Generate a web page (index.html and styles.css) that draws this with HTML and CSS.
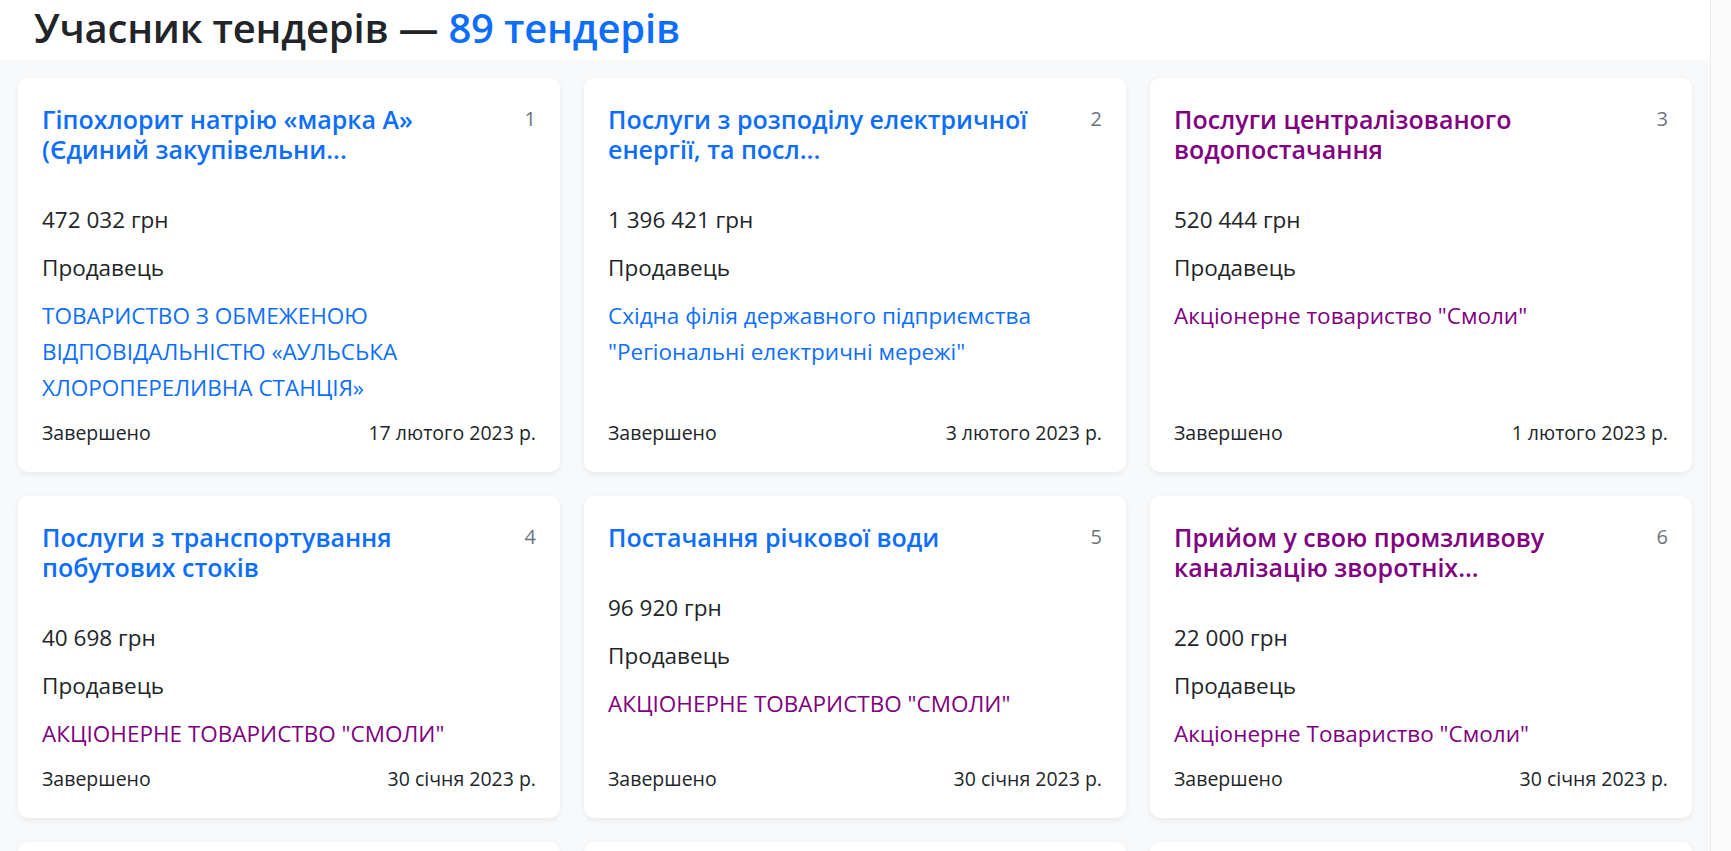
FILE: index.html
```html
<!DOCTYPE html>
<html>
	<head>
		<meta charset="UTF-8">
		<title>Учасник тендерів</title>
		<link rel="stylesheet" href="styles.css">
	</head>
	<body>
		<div class="page">
			<div class="content">
				<div class="top">
					<h2>Учасник тендерів — <span class="count">89 тендерів</span></h2>
				</div>
				<div class="grid">
					<div class="card">
						<div class="card-head">
							<a class="title" href="#">Гіпохлорит натрію «марка А» (Єдиний закупівельни...</a>
							<span class="num">1</span>
						</div>
						<p class="price">472 032 грн</p>
						<p class="label">Продавець</p>
						<a class="seller" href="#">ТОВАРИСТВО З ОБМЕЖЕНОЮ ВІДПОВІДАЛЬНІСТЮ «АУЛЬСЬКА ХЛОРОПЕРЕЛИВНА СТАНЦІЯ»</a>
						<div class="card-foot">
							<span>Завершено</span>
							<span>17 лютого 2023 р.</span>
						</div>
					</div>
					<div class="card">
						<div class="card-head">
							<a class="title" href="#">Послуги з розподілу електричної енергії, та посл...</a>
							<span class="num">2</span>
						</div>
						<p class="price">1 396 421 грн</p>
						<p class="label">Продавець</p>
						<a class="seller" href="#">Східна філія державного підприємства "Регіональні електричні мережі"</a>
						<div class="card-foot">
							<span>Завершено</span>
							<span>3 лютого 2023 р.</span>
						</div>
					</div>
					<div class="card">
						<div class="card-head">
							<a class="title visited" href="#">Послуги централізованого водопостачання</a>
							<span class="num">3</span>
						</div>
						<p class="price">520 444 грн</p>
						<p class="label">Продавець</p>
						<a class="seller visited" href="#">Акціонерне товариство "Смоли"</a>
						<div class="card-foot">
							<span>Завершено</span>
							<span>1 лютого 2023 р.</span>
						</div>
					</div>
					<div class="card">
						<div class="card-head">
							<a class="title" href="#">Послуги з транспортування побутових стоків</a>
							<span class="num">4</span>
						</div>
						<p class="price">40 698 грн</p>
						<p class="label">Продавець</p>
						<a class="seller visited" href="#">АКЦІОНЕРНЕ ТОВАРИСТВО "СМОЛИ"</a>
						<div class="card-foot">
							<span>Завершено</span>
							<span>30 січня 2023 р.</span>
						</div>
					</div>
					<div class="card">
						<div class="card-head">
							<a class="title" href="#">Постачання річкової води</a>
							<span class="num">5</span>
						</div>
						<p class="price">96 920 грн</p>
						<p class="label">Продавець</p>
						<a class="seller visited" href="#">АКЦІОНЕРНЕ ТОВАРИСТВО "СМОЛИ"</a>
						<div class="card-foot">
							<span>Завершено</span>
							<span>30 січня 2023 р.</span>
						</div>
					</div>
					<div class="card">
						<div class="card-head">
							<a class="title visited" href="#">Прийом у свою промзливову каналізацію зворотніх...</a>
							<span class="num">6</span>
						</div>
						<p class="price">22 000 грн</p>
						<p class="label">Продавець</p>
						<a class="seller visited" href="#">Акціонерне Товариство "Смоли"</a>
						<div class="card-foot">
							<span>Завершено</span>
							<span>30 січня 2023 р.</span>
						</div>
					</div>
					<div class="card">
						<div class="card-head">
							<a class="title" href="#">Послуги з водовідведення</a>
							<span class="num">7</span>
						</div>
						<p class="price">18 540 грн</p>
						<p class="label">Продавець</p>
						<a class="seller visited" href="#">Акціонерне товариство "Смоли"</a>
						<div class="card-foot">
							<span>Завершено</span>
							<span>27 січня 2023 р.</span>
						</div>
					</div>
					<div class="card">
						<div class="card-head">
							<a class="title" href="#">Електрична енергія</a>
							<span class="num">8</span>
						</div>
						<p class="price">250 000 грн</p>
						<p class="label">Продавець</p>
						<a class="seller" href="#">ТОВ "Енергозбут"</a>
						<div class="card-foot">
							<span>Завершено</span>
							<span>25 січня 2023 р.</span>
						</div>
					</div>
					<div class="card">
						<div class="card-head">
							<a class="title" href="#">Природний газ</a>
							<span class="num">9</span>
						</div>
						<p class="price">96 000 грн</p>
						<p class="label">Продавець</p>
						<a class="seller" href="#">ТОВ "Газопостач"</a>
						<div class="card-foot">
							<span>Завершено</span>
							<span>20 січня 2023 р.</span>
						</div>
					</div>
				</div>
			</div>
			<div class="scrollbar"></div>
		</div>
	</body>
</html>
```
FILE: styles.css
```css
*{
	margin: 0;
	padding: 0;
	box-sizing: border-box;
}
body{
	font-family: "Open Sans", "Noto Sans", sans-serif;
	color: #212529;
	background: #f8f9fa;
}
a{
	text-decoration: none;
	color: #0d6efd;
}
.page{
	display: flex;
	min-height: 100vh;
}
.content{
	flex: 1;
}
.scrollbar{
	width: 21px;
	flex-shrink: 0;
	background: #fbfbfb;
	border-left: 1px solid #ececec;
}
.top{
	background: #fff;
	height: 60px;
	padding: 3px 34px 0;
}
.top h2{
	font-size: 40px;
	line-height: 50px;
	font-weight: 600;
	letter-spacing: -0.2px;
}
.count{
	color: #0d6efd;
}
.grid{
	display: grid;
	grid-template-columns: repeat(3, 1fr);
	gap: 24px;
	padding: 18px 18px 24px;
}
.card{
	display: flex;
	flex-direction: column;
	background: #fff;
	border-radius: 10px;
	box-shadow: 0 2px 6px rgba(0, 0, 0, 0.07);
	padding: 26px 24px 24px;
}
.card-head{
	display: flex;
	justify-content: space-between;
	align-items: flex-start;
	margin-bottom: 38px;
}
.title{
	max-width: 445px;
	font-size: 25px;
	line-height: 30px;
	font-weight: 600;
}
.num{
	font-size: 20px;
	line-height: 30px;
	color: #6c757d;
	margin-left: 16px;
}
.visited{
	color: #800080;
}
.price, .label{
	font-size: 22.5px;
	line-height: 36px;
	margin-bottom: 12px;
}
.seller{
	font-size: 22.5px;
	line-height: 36px;
}
.card-foot{
	display: flex;
	justify-content: space-between;
	margin-top: auto;
	padding-top: 12px;
	font-size: 19.5px;
	line-height: 30px;
}
```
